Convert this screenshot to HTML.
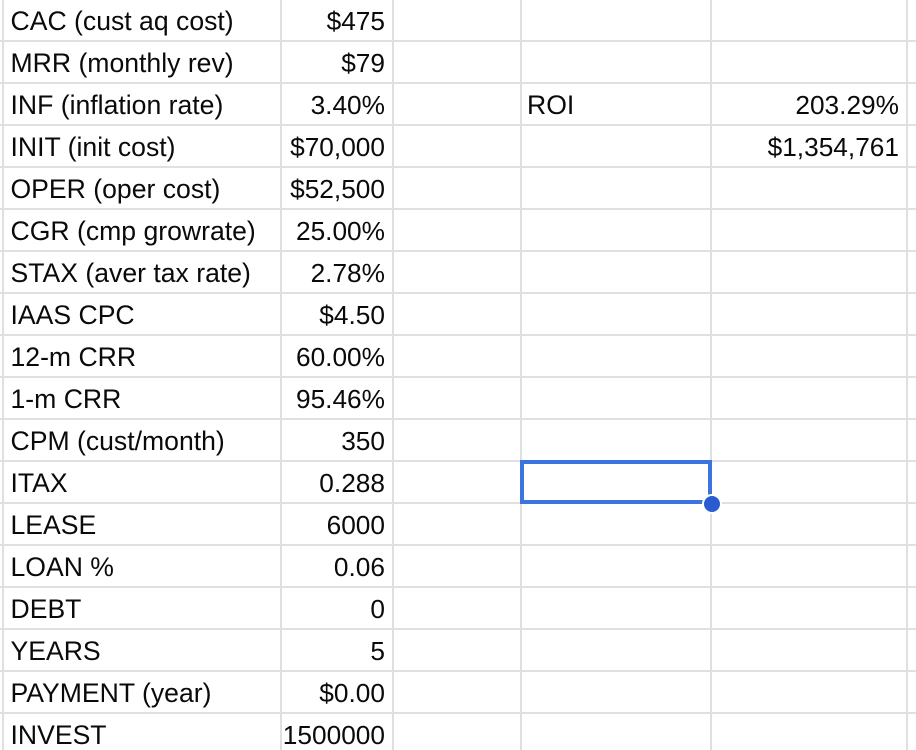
<!DOCTYPE html>
<html>
<head>
<meta charset="utf-8">
<style>
html,body{margin:0;padding:0;background:#fff;}
#s{position:relative;width:916px;height:750px;overflow:hidden;background:#fff;font-family:"Liberation Sans",Arial,sans-serif;font-size:26.6px;color:#0a0a0a;}
.h{position:absolute;left:0;width:916px;height:2px;background:#e0e0e0;}
.v{position:absolute;top:0;width:2px;height:750px;background:#e0e0e0;}
.l,.r{position:absolute;line-height:40px;height:40px;white-space:nowrap;}
.l{text-align:left;}
.r{text-align:right;font-size:26.25px;}
.a{left:10.5px;}
.b{right:531px;}
.c{left:527px;}
.d{right:17px;}
#sel{position:absolute;left:520px;top:460px;width:192px;height:44px;box-sizing:border-box;border:4px solid #3b74de;}
#dot{position:absolute;left:702px;top:494px;width:20px;height:20px;box-sizing:border-box;border-radius:50%;background:#2a5bd0;border:2px solid #fff;}
</style>
</head>
<body>
<div id="s">
<div class="h" style="top:40px"></div>
<div class="h" style="top:82px"></div>
<div class="h" style="top:124px"></div>
<div class="h" style="top:166px"></div>
<div class="h" style="top:208px"></div>
<div class="h" style="top:250px"></div>
<div class="h" style="top:292px"></div>
<div class="h" style="top:334px"></div>
<div class="h" style="top:376px"></div>
<div class="h" style="top:418px"></div>
<div class="h" style="top:460px"></div>
<div class="h" style="top:502px"></div>
<div class="h" style="top:544px"></div>
<div class="h" style="top:586px"></div>
<div class="h" style="top:628px"></div>
<div class="h" style="top:670px"></div>
<div class="h" style="top:712px"></div>
<div class="v" style="left:2px"></div>
<div class="v" style="left:280px"></div>
<div class="v" style="left:392px"></div>
<div class="v" style="left:520px"></div>
<div class="v" style="left:710px"></div>
<div class="v" style="left:906px"></div>

<div class="l a" style="top:1px">CAC (cust aq cost)</div><div class="r b" style="top:1px">$475</div>
<div class="l a" style="top:43px">MRR (monthly rev)</div><div class="r b" style="top:43px">$79</div>
<div class="l a" style="top:85px">INF (inflation rate)</div><div class="r b" style="top:85px">3.40%</div>
<div class="l a" style="top:127px">INIT (init cost)</div><div class="r b" style="top:127px">$70,000</div>
<div class="l a" style="top:169px">OPER (oper cost)</div><div class="r b" style="top:169px">$52,500</div>
<div class="l a" style="top:211px">CGR (cmp growrate)</div><div class="r b" style="top:211px">25.00%</div>
<div class="l a" style="top:253px">STAX (aver tax rate)</div><div class="r b" style="top:253px">2.78%</div>
<div class="l a" style="top:295px">IAAS CPC</div><div class="r b" style="top:295px">$4.50</div>
<div class="l a" style="top:337px">12-m CRR</div><div class="r b" style="top:337px">60.00%</div>
<div class="l a" style="top:379px">1-m CRR</div><div class="r b" style="top:379px">95.46%</div>
<div class="l a" style="top:421px">CPM (cust/month)</div><div class="r b" style="top:421px">350</div>
<div class="l a" style="top:463px">ITAX</div><div class="r b" style="top:463px">0.288</div>
<div class="l a" style="top:505px">LEASE</div><div class="r b" style="top:505px">6000</div>
<div class="l a" style="top:547px">LOAN %</div><div class="r b" style="top:547px">0.06</div>
<div class="l a" style="top:589px">DEBT</div><div class="r b" style="top:589px">0</div>
<div class="l a" style="top:631px">YEARS</div><div class="r b" style="top:631px">5</div>
<div class="l a" style="top:673px">PAYMENT (year)</div><div class="r b" style="top:673px">$0.00</div>
<div class="l a" style="top:715px">INVEST</div><div class="r b" style="top:715px">1500000</div>

<div class="l c" style="top:85px">ROI</div><div class="r d" style="top:85px">203.29%</div>
<div class="r d" style="top:127px">$1,354,761</div>

<div id="sel"></div>
<div id="dot"></div>
</div>
</body>
</html>
